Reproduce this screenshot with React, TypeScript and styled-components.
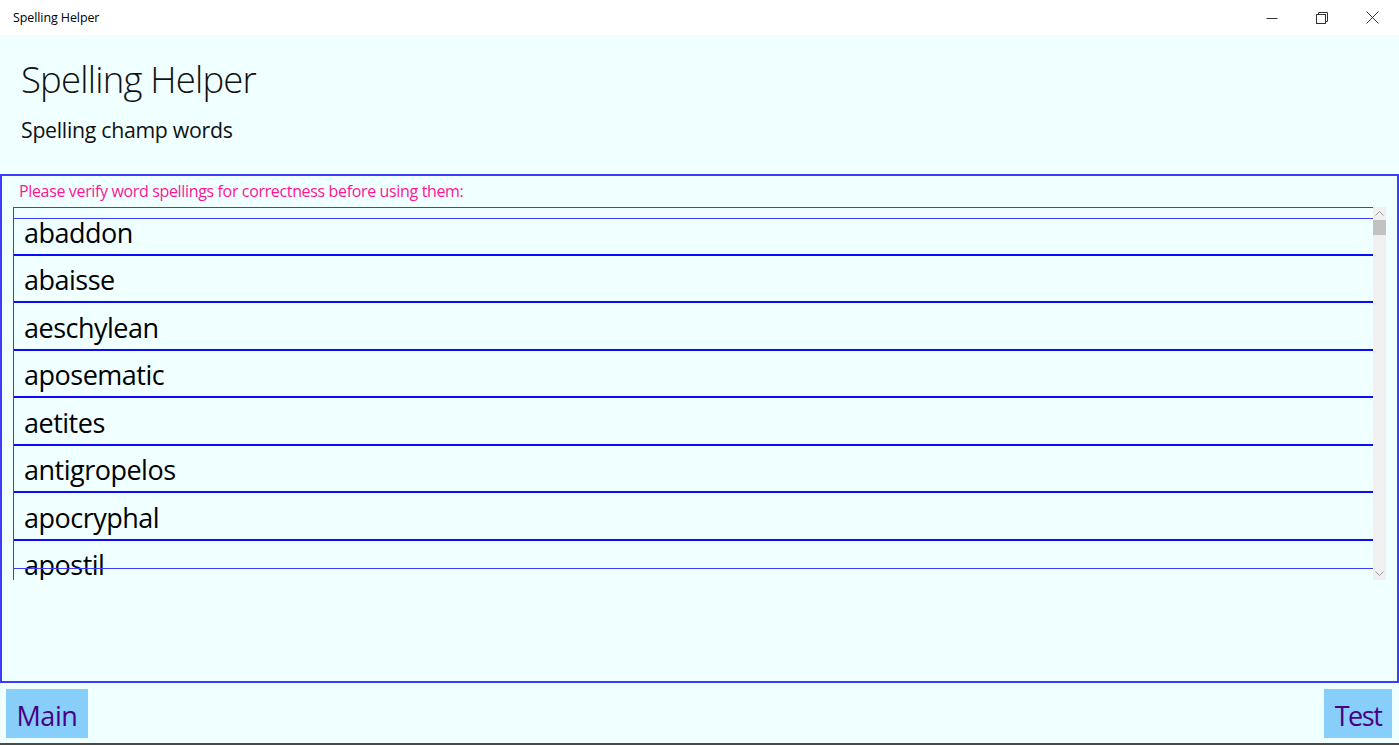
import React from "react";
import styled, { createGlobalStyle } from "styled-components";

const words = [
  "abaddon",
  "abaisse",
  "aeschylean",
  "aposematic",
  "aetites",
  "antigropelos",
  "apocryphal",
  "apostil",
];

const GlobalStyle = createGlobalStyle`
  html, body {
    margin: 0;
    padding: 0;
    overflow: hidden;
  }
  body {
    font-family: "Open Sans", "Noto Sans", sans-serif;
    color: #000000;
  }
`;

const App = () => {
  return (
    <Window>
      <GlobalStyle />
      <TitleBar>
        <WindowTitle>Spelling Helper</WindowTitle>
        <Caption>
          <CaptionButton>
            <svg width="12" height="12" viewBox="0 0 12 12">
              <line x1="0.5" y1="6.5" x2="11.5" y2="6.5" stroke="#333" strokeWidth="1" />
            </svg>
          </CaptionButton>
          <CaptionButton>
            <svg width="12" height="12" viewBox="0 0 12 12">
              <rect x="0.5" y="2.5" width="9" height="9" fill="none" stroke="#333" />
              <path d="M2.5 2.5 V0.5 H11.5 V9.5 H9.5" fill="none" stroke="#333" />
            </svg>
          </CaptionButton>
          <CaptionButton>
            <svg width="13" height="13" viewBox="0 0 13 13">
              <path d="M0.5 0.5 L12.5 12.5 M12.5 0.5 L0.5 12.5" stroke="#333" strokeWidth="1" />
            </svg>
          </CaptionButton>
        </Caption>
      </TitleBar>

      <Page>
        <Header>
          <Title>Spelling Helper</Title>
          <Subtitle>Spelling champ words</Subtitle>
        </Header>

        <Panel>
          <Warning>Please verify word spellings for correctness before using them:</Warning>
          <ListArea>
            <ListViewport>
              {words.map((w) => (
                <WordRow key={w}>{w}</WordRow>
              ))}
              <FocusFrame />
            </ListViewport>
            <ScrollBar>
              <ScrollArrow>
                <svg width="9" height="5" viewBox="0 0 9 5">
                  <path d="M0.5 4.5 L4.5 0.5 L8.5 4.5" fill="none" stroke="#9a9a9a" />
                </svg>
              </ScrollArrow>
              <Thumb />
              <Track />
              <ScrollArrow>
                <svg width="9" height="5" viewBox="0 0 9 5">
                  <path d="M0.5 0.5 L4.5 4.5 L8.5 0.5" fill="none" stroke="#9a9a9a" />
                </svg>
              </ScrollArrow>
            </ScrollBar>
          </ListArea>
        </Panel>

        <Footer>
          <NavButton $width={82}>Main</NavButton>
          <NavButton $width={68} $tight>
            Test
          </NavButton>
        </Footer>
      </Page>
      <Taskbar />
    </Window>
  );
};

const Window = styled.div`
  width: 1399px;
  height: 745px;
  display: flex;
  flex-direction: column;
  background: #f0ffff;
`;

const TitleBar = styled.div`
  height: 35px;
  background: #ffffff;
  display: flex;
  align-items: center;
  justify-content: space-between;
  padding-left: 13px;
  flex-shrink: 0;
`;

const WindowTitle = styled.div`
  font-size: 12.5px;
  letter-spacing: -0.1px;
  color: #000000;
  padding-bottom: 1px;
`;

const Caption = styled.div`
  display: flex;
  height: 100%;
  padding-right: 2px;
`;

const CaptionButton = styled.div`
  width: 50px;
  height: 100%;
  display: flex;
  align-items: center;
  justify-content: center;
`;

const Page = styled.div`
  flex: 1;
  display: flex;
  flex-direction: column;
  background: #f0ffff;
`;

const Header = styled.div`
  height: 139px;
  padding-left: 21px;
  display: flex;
  flex-direction: column;
  flex-shrink: 0;
`;

const Title = styled.h1`
  margin: 20px 0 0 0;
  font-weight: 300;
  font-size: 36.5px;
  line-height: 48px;
  letter-spacing: -0.8px;
  color: #111111;
`;

const Subtitle = styled.div`
  margin-top: 12px;
  font-size: 21.3px;
  line-height: 30px;
  letter-spacing: -0.3px;
  color: #111111;
`;

const Panel = styled.div`
  height: 509px;
  border: 2px solid #3c3cff;
  box-sizing: border-box;
  display: flex;
  flex-direction: column;
  flex-shrink: 0;
`;

const Warning = styled.div`
  padding: 4px 0 0 17px;
  height: 26px;
  box-sizing: border-box;
  font-size: 16px;
  line-height: 22px;
  letter-spacing: -0.35px;
  color: #ff1493;
  margin-bottom: 5px;
`;

const ListArea = styled.div`
  display: flex;
  margin-left: 11px;
  height: 373px;
  width: 1373px;
`;

const ListViewport = styled.div`
  position: relative;
  flex: 1;
  overflow: hidden;
  border-top: 1px solid #3c3cff;
  border-left: 1px solid #3c3cff;
`;

const WordRow = styled.div`
  height: 47.5px;
  box-sizing: border-box;
  border-bottom: 2px solid #0a0aff;
  padding: 3px 0 0 10px;
  display: flex;
  align-items: center;
  font-size: 27px;
  letter-spacing: -0.5px;
  color: #000000;
`;

const FocusFrame = styled.div`
  position: absolute;
  left: 0;
  right: 0;
  top: 10px;
  height: 349px;
  border-top: 1px solid #3c3cff;
  border-bottom: 1px solid #3c3cff;
  pointer-events: none;
`;

const ScrollBar = styled.div`
  width: 13px;
  background: #f0f0f0;
  display: flex;
  flex-direction: column;
`;

const ScrollArrow = styled.div`
  height: 13px;
  display: flex;
  align-items: center;
  justify-content: center;
`;

const Thumb = styled.div`
  height: 15px;
  background: #c2c2c2;
`;

const Track = styled.div`
  flex: 1;
`;

const Footer = styled.div`
  flex: 1;
  display: flex;
  justify-content: space-between;
  align-items: flex-start;
  padding: 6px 7px 0 6px;
`;

const NavButton = styled.button<{ $width: number; $tight?: boolean }>`
  width: ${(p) => p.$width}px;
  height: 49px;
  padding: 4px 0 0 0;
  border: none;
  background: #87cefa;
  color: #4b0082;
  font-family: "Open Sans", "Noto Sans", sans-serif;
  font-size: 27px;
  letter-spacing: ${(p) => (p.$tight ? "-1.5px" : "-0.4px")};
  line-height: 45px;
  text-align: center;
  cursor: pointer;
`;

const Taskbar = styled.div`
  height: 2px;
  background: #4a4a4a;
  flex-shrink: 0;
`;

export default App;
